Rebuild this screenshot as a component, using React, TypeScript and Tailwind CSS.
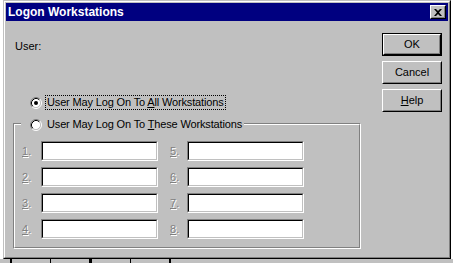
import React from "react";

function Radio({ checked }: { checked?: boolean }) {
  return (
    <svg width="12" height="12" viewBox="0 0 12 12" className="shrink-0">
      <circle cx="6" cy="6" r="4.5" fill="#ffffff" />
      <path d="M2.11 9.89A5.5 5.5 0 0 1 9.89 2.11" stroke="#808080" fill="none" />
      <path d="M9.89 2.11A5.5 5.5 0 0 1 2.11 9.89" stroke="#ffffff" fill="none" />
      <path d="M2.82 9.18A4.5 4.5 0 0 1 9.18 2.82" stroke="#000000" fill="none" />
      <path d="M9.18 2.82A4.5 4.5 0 0 1 2.82 9.18" stroke="#c0c0c0" fill="none" />
      {checked && <circle cx="6" cy="6" r="2" fill="#000000" />}
    </svg>
  );
}

function Field() {
  return (
    <div className="w-[117px] h-[20px] border border-t-[#808080] border-l-[#808080] border-r-white border-b-white">
      <div className="h-full border border-t-black border-l-black border-r-[#c0c0c0] border-b-[#c0c0c0] bg-white" />
    </div>
  );
}

function Num({ n, className }: { n: number; className: string }) {
  return (
    <span className={`${className} text-[#808080] [text-shadow:1px_1px_0_#ffffff]`}>
      <u>{n}</u>.
    </span>
  );
}

function Btn({ children, isDefault }: { children: React.ReactNode; isDefault?: boolean }) {
  const inner = (
    <div className="h-full border border-t-white border-l-white border-r-black border-b-black">
      <div className="h-full flex items-center justify-center border border-t-[#c0c0c0] border-l-[#c0c0c0] border-r-[#808080] border-b-[#808080]">
        {children}
      </div>
    </div>
  );
  if (isDefault) {
    return <div className="w-[60px] h-[23px] border border-black">{inner}</div>;
  }
  return <div className="w-[60px] h-[23px]">{inner}</div>;
}

export default function App() {
  return (
    <div className="relative w-[453px] h-[263px] overflow-hidden bg-white font-['Liberation_Sans',Arial,sans-serif] text-[11px] leading-[13px] text-black">
      {/* bits of the desktop behind the dialog */}
      <div className="absolute left-0 bottom-0 w-full h-[4px] bg-[#c0c0c0] flex gap-[38px] pl-[10px]">
        <span className="w-[2px] h-full bg-black" />
        <span className="w-[1px] h-full bg-black" />
        <span className="w-[3px] h-full bg-black" />
        <span className="w-[1px] h-full bg-black" />
        <span className="w-[2px] h-full bg-black" />
      </div>

      {/* dialog window */}
      <div className="absolute left-[3px] top-0 w-[448px] h-[259px] border border-t-[#c0c0c0] border-l-[#c0c0c0] border-r-black border-b-black">
        <div className="h-full flex flex-col p-px bg-[#c0c0c0] border border-t-white border-l-white border-r-[#808080] border-b-[#808080]">
          {/* title bar */}
          <div className="h-[18px] shrink-0 bg-[#000080] flex items-center justify-between pl-[2px] pr-[2px]">
            <span className="text-white font-bold text-[12px] leading-[14px]">Logon Workstations</span>
            <div className="w-[16px] h-[14px] border border-t-white border-l-white border-r-black border-b-black bg-[#c0c0c0]">
              <div className="h-full flex items-center justify-center border border-t-[#c0c0c0] border-l-[#c0c0c0] border-r-[#808080] border-b-[#808080]">
                <svg width="8" height="7" viewBox="0 0 8 7">
                  <path d="M0 0h2l2 2 2-2h2L5 3.5 8 7H6L4 5 2 7H0l3-3.5z" fill="#000000" />
                </svg>
              </div>
            </div>
          </div>

          {/* body */}
          <div className="flex flex-1">
            <div className="flex-1 flex flex-col pl-[7px] pt-[19px]">
              <div className="pl-[2px]">User:</div>

              <div className="mt-[41px] ml-[17px] h-[17px] flex items-center">
                <Radio checked />
                <span className="ml-[3px] border border-dotted border-black px-px leading-[13px] tracking-[-0.15px]">
                  User May Log On To <u>A</u>ll Workstations
                </span>
              </div>

              <div className="mt-[12px] w-[348px] border border-t-[#808080] border-l-[#808080] border-r-white border-b-white">
                <div className="border border-t-white border-l-white border-r-[#808080] border-b-[#808080] pb-[8px]">
                  <div className="-mt-[9px] ml-[6px] w-fit h-[17px] flex items-center pl-[9px] pr-[2px] bg-[#c0c0c0]">
                    <Radio />
                    <span className="ml-[5px] tracking-[-0.15px]">
                      User May Log On To <u>T</u>hese Workstations
                    </span>
                  </div>

                  <div className="mt-[8px] flex flex-col gap-[6px] pl-[7px]">
                    {[1, 2, 3, 4].map((n) => (
                      <div key={n} className="flex items-center">
                        <Num n={n} className="w-[19px]" />
                        <Field />
                        <Num n={n + 4} className="ml-[12px] w-[17px]" />
                        <Field />
                      </div>
                    ))}
                  </div>
                </div>
              </div>
            </div>

            <div className="flex flex-col gap-[5px] pt-[12px] pr-[6px]">
              <Btn isDefault>OK</Btn>
              <Btn>Cancel</Btn>
              <Btn>
                <span>
                  <u>H</u>elp
                </span>
              </Btn>
            </div>
          </div>
        </div>
      </div>
    </div>
  );
}
